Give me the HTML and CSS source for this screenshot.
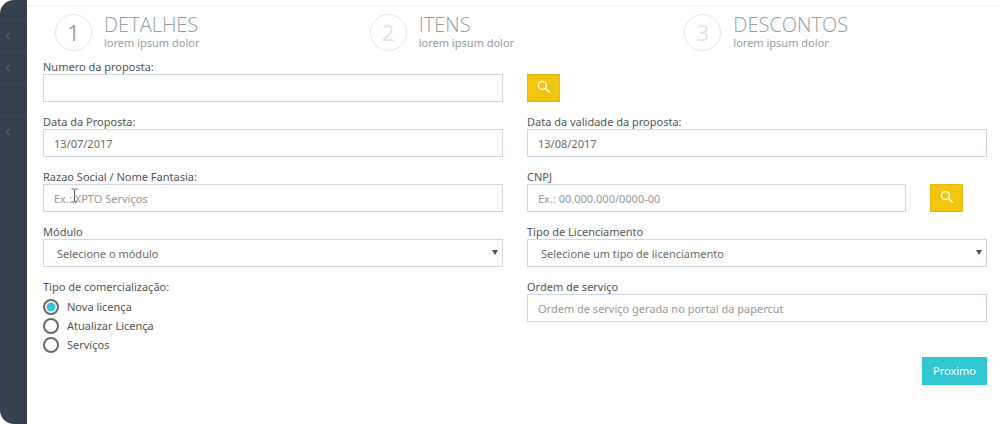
FILE: index.html
```html
<!DOCTYPE html>
<html lang="pt-BR">
<head>
<meta charset="utf-8">
<meta name="viewport" content="width=device-width, initial-scale=1">
<title>Proposta</title>
<link rel="stylesheet" href="styles.css">
</head>
<body>
<div class="app">
  <nav class="sidebar" aria-label="Menu">
    <span class="side-item"></span>
    <a class="side-item" href="#" aria-label="Menu 1"><svg class="chevron" viewBox="0 0 6 8"><path d="M4.5 .8 1.3 4l3.2 3.2"/></svg></a>
    <a class="side-item" href="#" aria-label="Menu 2"><svg class="chevron" viewBox="0 0 6 8"><path d="M4.5 .8 1.3 4l3.2 3.2"/></svg></a>
    <a class="side-item" href="#" aria-label="Menu 3"></a>
    <a class="side-item side-item-last" href="#" aria-label="Menu 4"><svg class="chevron" viewBox="0 0 6 8"><path d="M4.5 .8 1.3 4l3.2 3.2"/></svg></a>
  </nav>
  <main class="main">
    <ol class="steps">
      <li class="step step-active"><span class="step-number">1</span><span class="step-text"><span class="step-title">DETALHES</span><span class="step-sub">lorem ipsum dolor</span></span></li>
      <li class="step"><span class="step-number">2</span><span class="step-text"><span class="step-title">ITENS</span><span class="step-sub">lorem ipsum dolor</span></span></li>
      <li class="step"><span class="step-number">3</span><span class="step-text"><span class="step-title">DESCONTOS</span><span class="step-sub">lorem ipsum dolor</span></span></li>
    </ol>
    <form class="form">
      <div class="field">
        <label for="numero">Numero da proposta:</label>
        <input class="control" id="numero" type="text">
      </div>
      <div class="field field-button">
        <button class="search" type="button" aria-label="Buscar proposta"><svg class="search-icon" viewBox="0 0 14 14"><circle cx="5.4" cy="5.4" r="4"/><path d="m8.4 8.4 4.4 4.2"/></svg></button>
      </div>
      <div class="field">
        <label for="data">Data da Proposta:</label>
        <input class="control" id="data" type="text" value="13/07/2017">
      </div>
      <div class="field">
        <label for="validade">Data da validade da proposta:</label>
        <input class="control" id="validade" type="text" value="13/08/2017">
      </div>
      <div class="field">
        <label for="razao">Razao Social / Nome Fantasia:</label>
        <input class="control" id="razao" type="text" placeholder="Ex.: XPTO Serviços">
        <svg class="cursor" viewBox="0 0 7 15" aria-hidden="true"><path d="M.5 1h2l1 .8 1-.8h2M3.500 1.800v11.400M.5 14h2l1-.8 1 .8h2"/></svg>
      </div>
      <div class="split">
        <div class="field split-wide">
          <label for="cnpj">CNPJ</label>
          <input class="control" id="cnpj" type="text" placeholder="Ex.: 00.000.000/0000-00">
        </div>
        <div class="field field-button">
          <button class="search" type="button" aria-label="Buscar CNPJ"><svg class="search-icon" viewBox="0 0 14 14"><circle cx="5.4" cy="5.4" r="4"/><path d="m8.4 8.4 4.4 4.2"/></svg></button>
        </div>
      </div>
      <div class="field">
        <label for="modulo">Módulo</label>
        <div class="select-wrap"><select class="control select" id="modulo"><option>Selecione o módulo</option></select></div>
      </div>
      <div class="field">
        <label for="tipo">Tipo de Licenciamento</label>
        <div class="select-wrap"><select class="control select" id="tipo"><option>Selecione um tipo de licenciamento</option></select></div>
      </div>
      <fieldset class="radios">
        <legend>Tipo de comercialização:</legend>
        <label class="radio"><input type="radio" name="comercializacao" checked>Nova licença</label>
        <label class="radio"><input type="radio" name="comercializacao">Atualizar Licença</label>
        <label class="radio"><input type="radio" name="comercializacao">Serviços</label>
      </fieldset>
      <div class="field">
        <label for="ordem">Ordem de serviço</label>
        <input class="control" id="ordem" type="text" placeholder="Ordem de serviço gerada no portal da papercut">
      </div>
      <div class="actions"><button class="next" type="button">Proximo</button></div>
    </form>
  </main>
</div>
</body>
</html>
```
FILE: styles.css
```css
* { box-sizing: border-box; }

body {
  margin: 0;
  background: #fff;
  color: #555;
  font: 11px/14px "Noto Sans", "Open Sans", sans-serif;
}

.app { display: flex; min-height: 100vh; }

.sidebar {
  flex: none;
  width: 27px;
  background: #364150;
  border-radius: 14px 0 0 14px;
  overflow: hidden;
}

.side-item {
  display: flex;
  align-items: center;
  height: 32px;
  padding-left: 5px;
  border-bottom: 1px solid #3d4957;
}
.side-item:first-child { height: 20px; }
.side-item-last { border-bottom: 0; }

.chevron {
  width: 6px;
  height: 8px;
  fill: none;
  stroke: #6c7887;
  stroke-width: 1;
}

.main { flex: 1; min-width: 0; padding: 5px 2px 0 0; }

.steps {
  display: grid;
  grid-template-columns: repeat(3, 1fr);
  margin: 0;
  padding: 7px 11px 0 16px;
  border-top: 2px solid #f3f7fa;
  list-style: none;
}

.step { display: flex; gap: 12px; padding-left: 12px; color: #95a0a2; }

.step-number {
  flex: none;
  width: 37px;
  height: 37px;
  border: 1px solid #e5e5e5;
  border-radius: 50%;
  color: #e5e5e5;
  font-family: "Open Sans", sans-serif;
  font-size: 22px;
  line-height: 35px;
  text-align: center;
}
.step-active .step-number { color: #95a5a6; }

.step-text { display: flex; flex-direction: column; }
.step-title {
  font-family: "Open Sans", sans-serif;
  font-size: 20px;
  line-height: 22px;
  font-weight: 300;
}

.form {
  display: grid;
  grid-template-columns: repeat(2, minmax(0, 1fr));
  column-gap: 24px;
  padding: 9px 11px 0 16px;
}

.field {
  position: relative;
  display: flex;
  flex-direction: column;
  min-width: 0;
  margin-bottom: 13px;
}
.field-button { justify-content: flex-end; align-items: flex-start; }

.control {
  width: 100%;
  height: 28px;
  padding: 0 10px;
  border: 1px solid #d0d6e4;
  border-radius: 0;
  background: #fff;
  color: #6b6b6b;
  font: inherit;
}
.control::placeholder { color: #999; opacity: 1; }

.select-wrap { position: relative; display: flex; }
.select { appearance: none; padding: 2px 24px 0 13px; }
.select-wrap::after {
  content: "";
  position: absolute;
  top: 11px;
  right: 5px;
  border: solid transparent;
  border-width: 5px 3px 0;
  border-top-color: #505050;
  pointer-events: none;
}

.split {
  display: grid;
  grid-template-columns: repeat(6, minmax(0, 1fr));
  column-gap: 24px;
}
.split-wide { grid-column: span 5; }

.search {
  width: 33px;
  height: 28px;
  padding: 0 0 2px;
  border: 1px solid #e3b80f;
  background: #f2c511;
  display: flex;
  align-items: center;
  justify-content: center;
}
.search-icon {
  width: 14px;
  height: 14px;
  fill: none;
  stroke: #fff8dc;
  stroke-width: 1.5;
}

.radios { margin: 0 0 3px; padding: 0; border: 0; min-width: 0; }
.radios legend { padding: 0; margin-bottom: 3px; }
.radio { display: flex; align-items: center; gap: 8px; height: 19px; }
.radio input {
  appearance: none;
  width: 16px;
  height: 16px;
  margin: 0;
  border: 2px solid #6b6b6b;
  border-radius: 50%;
}
.radio input:checked { background: radial-gradient(circle, #36c6d3 4px, transparent 5px); }

.actions {
  grid-column: 1 / -1;
  display: flex;
  justify-content: flex-end;
}
.next {
  height: 28px;
  padding: 0 11px;
  border: 0;
  background: #32c5d2;
  color: #fff;
  font: inherit;
}

.cursor {
  position: absolute;
  left: 28px;
  top: 18px;
  width: 7px;
  height: 15px;
  fill: none;
  stroke: #555;
  stroke-width: 1;
}
```
